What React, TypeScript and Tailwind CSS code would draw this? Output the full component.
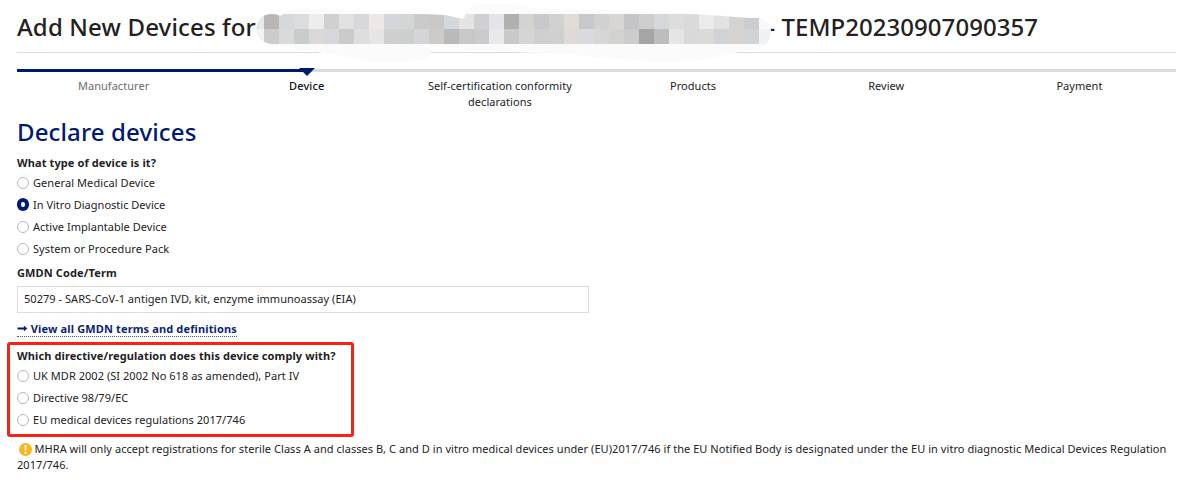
import React from 'react';

const steps = [
  { name: 'Manufacturer', style: 'text-[#6c6c6c]' },
  { name: 'Device', style: 'font-medium text-[#111] tracking-[0.15px]' },
  { name: 'Self-certification conformity declarations', style: '' },
  { name: 'Products', style: '' },
  { name: 'Review', style: '' },
  { name: 'Payment', style: '' },
];

const deviceTypes = [
  { label: 'General Medical Device', style: 'tracking-[0.08px]' },
  { label: 'In Vitro Diagnostic Device', style: 'tracking-[0.01px]' },
  { label: 'Active Implantable Device', style: 'tracking-[0.03px]' },
  { label: 'System or Procedure Pack', style: 'tracking-[0.08px]' },
];

const directives = [
  'UK MDR 2002 (SI 2002 No 618 as amended), Part IV',
  'Directive 98/79/EC',
  'EU medical devices regulations 2017/746',
];

const topCells =
  'bab6b6 d6d8db dadddc ededed d0d0d0 e1e1e1 d8d8da ede8e5 d3d6dc d4d5d5 cacaca cac8c7 d4d7db e5e4e3 d0d0d1 e2e4e8 b0b0b0 d4d3d2 c9c9cb d0d1d0 e0dcd7 c7c8cc d1d1d2 d7d6d4 c5c5c8 cececf d4d7db dedddc d9dadb ebebeb e2e2e2 d5d3d1 cbccd0'.split(' ');
const bottomCells =
  'cecccb d9dbda c8cccc dbd9d8 d5d7da cccbcb dcdee0 e7e5e3 cfcfcf cccfce d3d5d8 cdcac8 b9b9b9 c8c8c8 cacbcf e9e9ea c9c9c9 d5d5d5 cfcfcf cfd1d0 dedad7 d8dadd d6d6d6 d3d2d0 cccccc a5a5a5 bbbdbf e6e5e3 d9d9d9 dbdad9 d0d2d5 d6d3d1 d0d2d4'.split(' ');

// Hides the company name in the title
const Redaction: React.FC = () => (
  <svg className="absolute left-[250px] top-0" width="530" height="64" viewBox="250 0 530 64">
    <path
      d="M256 29Q258 14 272 14L281 14Q287 9 302 9H340Q365 10 380 14L463 19Q466 7 478 4H512Q526 5 532 8Q600 10 655 12Q700 13 755 18Q771 21 771 32Q770 47 755 50Q745 51 739 52L702 60Q660 62 635 60Q595 58 558 53Q500 53 433 46Q432 56 423 60Q400 62 368 61Q340 56 317 52L277 46Q257 44 256 29Z"
      fill="#fbfbfb"
    />
    <clipPath id="brush">
      <path d="M256 29Q258 14 272 14Q277 14 280 16L284 14H425L445 15L463 19Q465 17 466 14H685L700 14.5L750 18H759Q771 21 771 32Q770 39 766 44H271Q257 42 256 29Z" />
    </clipPath>
    <g clipPath="url(#brush)" shapeRendering="crispEdges">
      <rect x="249" y="14" width="15" height="15" fill="#e8eaea" />
      <rect x="249" y="29" width="15" height="15" fill="#f2f4f5" />
      {topCells.map((c, i) => (
        <rect key={i} x={264 + i * 15} y="14" width="15" height="15" fill={`#${c}`} />
      ))}
      {bottomCells.map((c, i) => (
        <rect key={i} x={264 + i * 15} y="29" width="15" height="15" fill={`#${c}`} />
      ))}
      <rect x="759" y="14" width="15" height="15" fill="#f8f8f9" />
      <rect x="759" y="29" width="15" height="15" fill="#eff1f4" />
    </g>
  </svg>
);

const Radio: React.FC<{ label: string; style?: string; checked?: boolean }> = ({ label, style, checked }) => (
  <label className="flex h-[22px] items-center">
    {checked ? (
      <span className="mb-px mr-1 flex h-[13px] w-3 items-center justify-center rounded-full bg-[#001a72]">
        <span className="h-[5px] w-1 rounded-[2px] bg-white" />
      </span>
    ) : (
      <span className="mr-1 size-3 rounded-full border border-[#b8b8b8] bg-white" />
    )}
    <span className={style}>{label}</span>
  </label>
);

const App: React.FC = () => {
  return (
    <div className="relative h-[480px] overflow-hidden bg-white pl-[17px] pr-[15px] font-['Noto_Sans',sans-serif] text-[11px] leading-4 tracking-[0.04px] text-[#222]">
      <header className="flex h-[53px] justify-between border-b border-[#dcdcdc] pt-[11px] text-[24px] font-medium leading-8">
        <h1 className="whitespace-nowrap tracking-[0.15px]">Add New Devices for</h1>
        <span className="mr-[138px] whitespace-nowrap">- TEMP20230907090357</span>
      </header>
      <Redaction />

      <div className="mt-4 h-[3px] bg-[#dcdcdc]">
        <div className="relative h-full w-[290px] bg-[#001a72]">
          <svg className="absolute -right-2 -top-px" width="16" height="9" viewBox="0 0 16 9">
            <path d="M0 0H16L8 8Z" fill="#001a72" />
          </svg>
        </div>
      </div>
      <ol className="grid h-[48px] grid-cols-6 pt-[6px] text-center">
        {steps.map((step) => (
          <li key={step.name} className={`px-5 ${step.style}`}>
            {step.name}
          </li>
        ))}
      </ol>

      <h2 className="-mt-1 text-[24px] font-medium leading-8 tracking-[0.13px] text-[#001a72]">Declare devices</h2>

      <h3 className="mt-[7px] font-bold tracking-[0.1px]">What type of device is it?</h3>
      <div className="mt-px">
        {deviceTypes.map((type) => (
          <Radio
            key={type.label}
            label={type.label}
            style={type.style}
            checked={type.label === 'In Vitro Diagnostic Device'}
          />
        ))}
      </div>

      <h3 className="mt-[5px] font-bold tracking-[0.13px]">GMDN Code/Term</h3>
      <div className="mt-[5px] flex h-[27px] w-[572px] items-center border border-[#dcdcdc] px-[6px] pb-px">
        50279 - SARS-CoV-1 antigen IVD, kit, enzyme immunoassay (EIA)
      </div>
      <a
        href="#"
        className="mt-2 flex w-[220px] items-center whitespace-nowrap border-b border-dotted border-[#555] font-bold leading-[15px] tracking-[0.14px] text-[#0b2470]"
      >
        <svg className="mr-[3px]" width="11" height="7" viewBox="0 0 11 7">
          <path d="M0.5 2.5H7V0.8L10.5 3.5L7 6.2V4.5H0.5Z" fill="#001a72" />
        </svg>
        View all GMDN terms and definitions
      </a>

      <section className="relative mt-[11px]">
        <div className="absolute -left-[10px] -top-[6px] h-[95px] w-[347px] rounded-[3px] border-3 border-[#fc2014]" />
        <h3 className="font-bold tracking-[0.11px]">Which directive/regulation does this device comply with?</h3>
        <div className="mt-px">
          {directives.map((directive) => (
            <Radio key={directive} label={directive} />
          ))}
        </div>
      </section>

      <p className="mt-[10px] tracking-[0.052px]">
        <svg className="ml-[1.5px] mr-[3px] inline-block align-text-bottom" width="13" height="13" viewBox="0 0 13 13">
          <circle cx="6.5" cy="6.5" r="6.5" fill="#f8b51c" />
          <path d="M5.4 2H7.6L7.3 7.7H5.7Z" fill="#fff" />
          <circle cx="6.5" cy="9.9" r="1.1" fill="#fff" />
        </svg>
        MHRA will only accept registrations for sterile Class A and classes B, C and D in vitro medical devices under
        (EU)2017/746 if the EU Notified Body is designated under the EU in vitro diagnostic Medical Devices Regulation
        2017/746.
      </p>
    </div>
  );
};

export default App;
